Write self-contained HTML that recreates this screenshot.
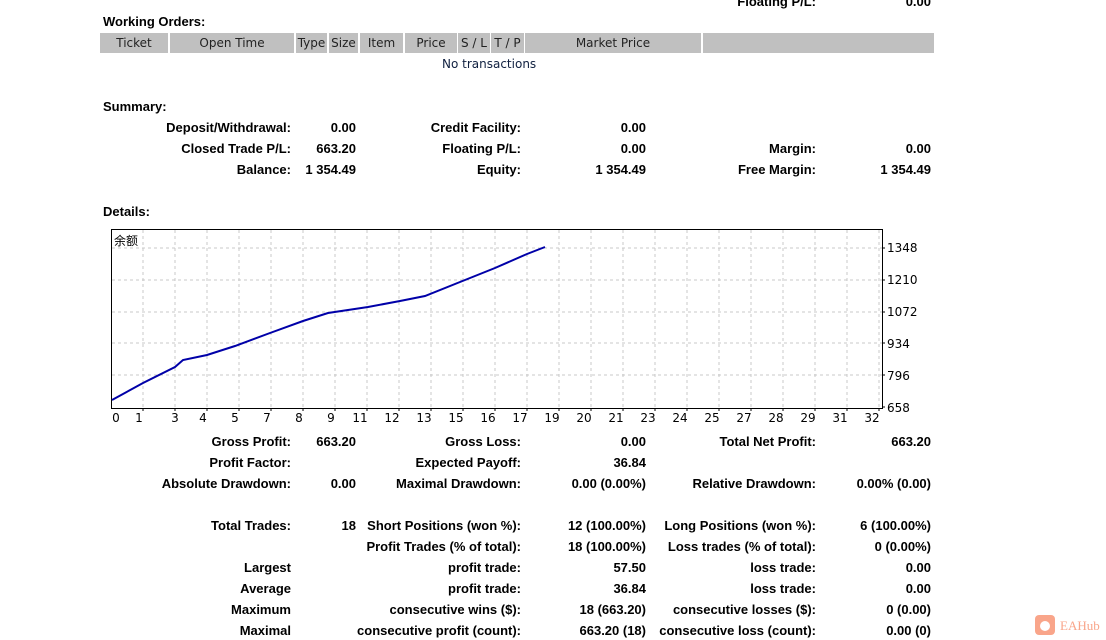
<!DOCTYPE html>
<html><head><meta charset="utf-8"><style>
body{margin:0;width:1106px;height:640px;background:#fff;position:relative;overflow:hidden;font-family:"DejaVu Sans","Liberation Sans",sans-serif;font-size:12px;color:#000}
.t{position:absolute;white-space:nowrap;line-height:14px}
.b{font-weight:bold;font-family:"Liberation Sans",sans-serif;font-size:13px}
.r{text-align:right}
.hd{position:absolute;top:33px;height:20px;background:#c0c0c0;line-height:20px;text-align:center;color:#222;font-size:12px}
</style></head><body>
<div class="t b r" style="right:290px;top:-5px">Floating P/L:</div>
<div class="t b r" style="right:175px;top:-5px">0.00</div>
<div class="t b" style="left:103px;top:15px">Working Orders:</div>
<div class="hd" style="left:100px;width:68px">Ticket</div>
<div class="hd" style="left:170px;width:124px">Open Time</div>
<div class="hd" style="left:296px;width:31px">Type</div>
<div class="hd" style="left:329px;width:29px">Size</div>
<div class="hd" style="left:360px;width:43px">Item</div>
<div class="hd" style="left:405px;width:52px">Price</div>
<div class="hd" style="left:458px;width:32px">S / L</div>
<div class="hd" style="left:491px;width:33px">T / P</div>
<div class="hd" style="left:525px;width:176px">Market Price</div>
<div class="hd" style="left:703px;width:231px"></div>
<div class="t" style="left:442px;top:57px;color:#102040">No transactions</div>
<div class="t b" style="left:103px;top:100px">Summary:</div>
<div class="t b" style="left:103px;top:205px">Details:</div>
<div id="rows"></div>
<svg style="position:absolute;left:0;top:0" width="1106" height="640">
<g stroke="#c8c8c8" stroke-dasharray="3,3" fill="none">
<path d="M112 248H882M112 280H882M112 312H882M112 343H882M112 375H882"/>
<path d="M143 230V408M175 230V408M207 230V408M239 230V408M271 230V408M303 230V408M335 230V408M367 230V408M399 230V408M431 230V408M463 230V408M495 230V408M527 230V408M559 230V408M591 230V408M623 230V408M655 230V408M687 230V408M719 230V408M751 230V408M783 230V408M815 230V408M847 230V408M879 230V408"/>
</g>
<rect x="111.5" y="229.5" width="771" height="179" fill="none" stroke="#000"/>
<polyline points="112,400 143,383 175,367 183,360 207,355 235,346 270,333 303,321 328,313 368,307 400,301 425,296 460,282 495,268 527,254 545,247" fill="none" stroke="#0000a8" stroke-width="2"/>
<g stroke="#000"><path d="M143 408v3M175 408v3M207 408v3M239 408v3M271 408v3M303 408v3M335 408v3M367 408v3M399 408v3M431 408v3M463 408v3M495 408v3M527 408v3M559 408v3M591 408v3M623 408v3M655 408v3M687 408v3M719 408v3M751 408v3M783 408v3M815 408v3M847 408v3M879 408v3"/>
<path d="M882 248h3M882 280h3M882 312h3M882 343h3M882 375h3M882 407h3"/></g>
<g font-family="DejaVu Sans,sans-serif" font-size="12" fill="#000">
<text x="887" y="252">1348</text><text x="887" y="284">1210</text><text x="887" y="316">1072</text><text x="887" y="348">934</text><text x="887" y="380">796</text><text x="887" y="412">658</text>
<g text-anchor="middle">
<text x="116" y="422">0</text><text x="139" y="422">1</text><text x="175" y="422">3</text><text x="203" y="422">4</text><text x="235" y="422">5</text><text x="267" y="422">7</text><text x="299" y="422">8</text><text x="331" y="422">9</text><text x="360" y="422">11</text><text x="392" y="422">12</text><text x="424" y="422">13</text><text x="456" y="422">15</text><text x="488" y="422">16</text><text x="520" y="422">17</text><text x="552" y="422">19</text><text x="584" y="422">20</text><text x="616" y="422">21</text><text x="648" y="422">23</text><text x="680" y="422">24</text><text x="712" y="422">25</text><text x="744" y="422">27</text><text x="776" y="422">28</text><text x="808" y="422">29</text><text x="840" y="422">31</text><text x="872" y="422">32</text>
</g>
<text x="114" y="245" font-family="Noto Sans CJK SC,sans-serif">余额</text>
</g>
<rect x="1035" y="615" width="20" height="20" rx="4" fill="#f9a58a"/>
<circle cx="1045" cy="626" r="5" fill="#fff"/>
<text x="1060" y="630" font-family="Liberation Serif,serif" font-size="13" fill="#f9a58a">EAHub</text>
</svg>
<script>
var R=[
[127,"Deposit/Withdrawal:","0.00","Credit Facility:","0.00","",""],
[148,"Closed Trade P/L:","663.20","Floating P/L:","0.00","Margin:","0.00"],
[169,"Balance:","1 354.49","Equity:","1 354.49","Free Margin:","1 354.49"],
[441,"Gross Profit:","663.20","Gross Loss:","0.00","Total Net Profit:","663.20"],
[462,"Profit Factor:","","Expected Payoff:","36.84","",""],
[483,"Absolute Drawdown:","0.00","Maximal Drawdown:","0.00 (0.00%)","Relative Drawdown:","0.00% (0.00)"],
[525,"Total Trades:","18","Short Positions (won %):","12 (100.00%)","Long Positions (won %):","6 (100.00%)"],
[546,"","","Profit Trades (% of total):","18 (100.00%)","Loss trades (% of total):","0 (0.00%)"],
[567,"Largest","","profit trade:","57.50","loss trade:","0.00"],
[588,"Average","","profit trade:","36.84","loss trade:","0.00"],
[609,"Maximum","","consecutive wins ($):","18 (663.20)","consecutive losses ($):","0 (0.00)"],
[630,"Maximal","","consecutive profit (count):","663.20 (18)","consecutive loss (count):","0.00 (0)"]];
var rr=[815,750,585,460,290,175],h="";
R.forEach(function(r){for(var i=1;i<7;i++){if(r[i])h+='<div class="t b r" style="right:'+rr[i-1]+'px;top:'+(r[0]-6)+'px">'+r[i]+'</div>';}});
document.getElementById("rows").innerHTML=h;
</script>
</body></html>
